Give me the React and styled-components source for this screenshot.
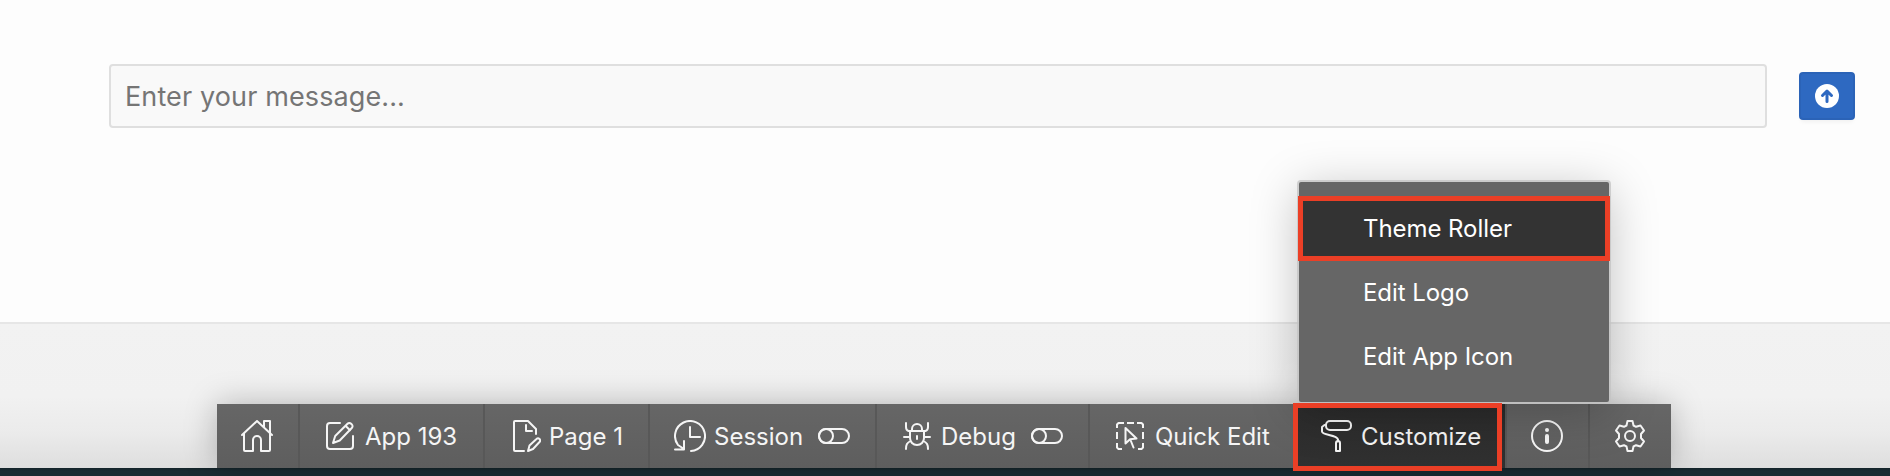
import React from "react";
import styled, { createGlobalStyle, css } from "styled-components";

const GlobalStyle = createGlobalStyle`
  *, *::before, *::after { box-sizing: border-box; }
  html, body { margin: 0; padding: 0; }
  body {
    overflow: hidden;
    font-family: Inter, "Liberation Sans", sans-serif;
    -webkit-font-smoothing: antialiased;
  }
`;

const Page = styled.div`
  display: flex;
  flex-direction: column;
  width: 1890px;
  height: 476px;
  overflow: hidden;
  background: #fdfdfd;
`;

const Composer = styled.main`
  display: flex;
  align-items: flex-start;
  height: 322px;
  padding: 64px 35px 0 109px;
`;

const MessageInput = styled.input`
  flex: 1;
  height: 64px;
  margin: 0 32px 0 0;
  padding: 0 14px;
  border: 2px solid #dfdfdf;
  border-radius: 4px;
  background: #f9f9f9;
  color: #404040;
  font: 400 27px Inter, sans-serif;
  letter-spacing: 0.12px;
  outline: none;
  &::placeholder { color: #757575; opacity: 1; }
`;

const SendButton = styled.button`
  display: flex;
  align-items: center;
  justify-content: center;
  width: 56px;
  height: 48px;
  margin: 8px 0 0;
  padding: 0 0 1px;
  border: 2px solid #2b63b7;
  border-radius: 4px;
  background: #2e69c1;
  box-shadow: 0 4px 4px -2px rgba(0, 0, 0, 0.05);
`;

const Footer = styled.footer`
  display: flex;
  justify-content: flex-start;
  align-items: flex-end;
  height: 146px;
  padding-left: 217px;
  border-top: 2px solid #e6e6e6;
  background: linear-gradient(#f2f2f2 0, #f1f1f1 50%, #ebebeb 75%, #dedede 100%);
`;

const BottomStrip = styled.div`
  position: relative;
  height: 8px;
  background: linear-gradient(#14242a, #1a2c33 3px);
`;

const Toolbar = styled.nav`
  position: relative;
  z-index: 1;
  display: flex;
  height: 64px;
  background: linear-gradient(#666, #5e5e5e);
  box-shadow: 0 0 32px rgba(0, 0, 0, 0.25);
`;

const ToolButton = styled.div`
  position: relative;
  display: flex;
  align-items: center;
  width: ${(p) => p.$width}px;
  height: 64px;
  padding-left: 24px;
  border-right: ${(p) => (p.$last ? "0" : "2px solid #585858")};
  color: #f5f5f5;
  ${(p) => p.$plain && css`
    border-right-color: transparent;
  `}
  ${(p) => p.$active && css`
    z-index: 1;
    background: linear-gradient(#2b2b2b, #313131);
  `}
`;

const Label = styled.span`
  margin-left: ${(p) => p.$gap ?? 8}px;
  padding-top: 2px;
  font-size: 24px;
  font-weight: 380;
  line-height: 32px;
  letter-spacing: ${(p) => p.$track ?? 0}px;
  white-space: nowrap;
`;

const MenuLabel = styled(Label)`
  margin-left: 0;
  padding: 0 0 2px;
  letter-spacing: -0.06px;
`;

const ToggleSlot = styled.span`
  display: flex;
  margin-left: auto;
  padding-right: 25px;
`;

const Menu = styled.div`
  position: absolute;
  left: 3px;
  bottom: 66px;
  width: 310px;
  height: 220px;
  padding: 16px 0;
  border-radius: 2px;
  background: #666;
  box-shadow: 0 0 0 2px rgba(195, 195, 195, 0.75), 0 8px 48px rgba(0, 0, 0, 0.25);
`;

const MenuItem = styled.div`
  position: relative;
  display: flex;
  align-items: center;
  height: 64px;
  padding-left: 64px;
  color: #fff;
  ${(p) => p.$active && css`
    height: 62px;
    margin-bottom: 2px;
    padding-top: 2px;
    background: #333;
  `}
`;

const Highlight = styled.span`
  position: absolute;
  inset: ${(p) => p.$inset};
  border: 5px solid #eb3f26;
  pointer-events: none;
`;

const Svg = styled.svg`
  flex: none;
  display: block;
  width: 32px;
  height: 32px;
  fill: none;
  stroke: currentColor;
  stroke-width: 2;
  stroke-linecap: round;
  stroke-linejoin: round;
`;

const Icon = ({ children }) => <Svg viewBox="0 0 32 32" aria-hidden="true">{children}</Svg>;

const HomeIcon = () => (
  <Icon>
    <path d="M1 15 16 1l15 14M3 13.5V30a1 1 0 0 0 1 1h8V20a4 4 0 0 1 8 0v11h8a1 1 0 0 0 1-1V13.500M23 7V1h6v11.500" />
  </Icon>
);
const EditIcon = () => (
  <Icon>
    <path d="M16 3H6a3 3 0 0 0-3 3v20a3 3 0 0 0 3 3h20a3 3 0 0 0 3-3V16" />
    <path d="m9 23 2.200-7L23.500 3.700a2.500 2.500 0 0 1 3.600 0l.7.700a2.500 2.500 0 0 1 0 3.600L15.700 20.500 9 23ZM21.500 5.700l4.500 4.500" />
  </Icon>
);
const PageIcon = () => (
  <Icon>
    <path d="M15 31H6a1 1 0 0 1-1-1V2a1 1 0 0 1 1-1h13l8 8v5M17 5v6h6" />
    <path d="m19 31 1.500-5.500 7-6.500a2 2 0 0 1 3 3l-6.500 7L19 31Z" />
  </Icon>
);
const SessionIcon = () => (
  <Icon>
    <path d="M17 31A15 15 0 1 0 4 25l6 4M16 7v10h10M10 21v8.500H1" />
  </Icon>
);
const ToggleIcon = () => (
  <Icon>
    <rect x="1" y="9" width="30" height="14" rx="7" />
    <circle cx="8" cy="16" r="7" />
  </Icon>
);
const BugIcon = () => (
  <Icon>
    <path d="M9 11h14v7c0 4-3 7-7 7s-7-3-7-7v-7ZM11 11V9a5 5 0 0 1 10 0v2M9 11H7.500C5.500 10.500 5 9 5 7V3M23 11h1.500c2-.5 2.500-2 2.500-4V3M3 17h6M23 17h6M9.500 21C6 23 5 24.500 5 29M22.500 21c3.500 2 4.500 3.500 4.500 8M16 16v3" />
  </Icon>
);
const QuickIcon = () => (
  <Icon>
    <path d="M3 8V4.500L4.500 3H10M13 3h7M23 3h4.500L29 4.500V8M3 12v7M3 23v4.500L4.500 29H8M29 12v7M29 23v4.500L27.500 29H24" strokeLinecap="butt" />
    <path d="M11.500 8v15.500l4.500-4.300 6.500-.7L11.500 8ZM16.500 20l3 7.500" />
  </Icon>
);
const RollerIcon = () => (
  <Icon>
    <rect x="6" y="1" width="25" height="9" rx="4" />
    <path d="M6 5H4.500L2 7v4.500c0 4 15 3 16 8v2M16 23a2 2 0 0 1 4 0v8h-4v-8Z" />
  </Icon>
);
const InfoIcon = () => (
  <Icon>
    <circle cx="16" cy="16" r="15" />
    <circle cx="16" cy="10" r="2" fill="currentColor" stroke="none" />
    <path d="M16 16v6" strokeWidth="4" />
  </Icon>
);
const GearIcon = () => (
  <Icon>
    <circle cx="16" cy="16" r="5" />
    <path d="M13.500 1h5l1 4.500 2.500 1.300L26.500 5.500l3.500 5-3 3.500v4l3 3.500-3.500 5-4.500-1.300-2.500 1.300-1 4.500h-5l-1-4.500L10 25.200l-4.500 1.300-3.500-5L5 18v-4l-3-3.500 3.500-5L10 6.800l2.500-1.300 1-4.500Z" />
  </Icon>
);

const SendIcon = styled.svg`
  display: block;
  width: 24px;
  height: 24px;
`;

export default function App() {
  return (
    <Page>
      <GlobalStyle />
      <Composer>
        <MessageInput placeholder="Enter your message..." aria-label="Message" />
        <SendButton aria-label="Send">
          <SendIcon viewBox="0 0 24 24">
            <circle cx="12" cy="12" r="12" fill="#fff" />
            <path d="M12 17.500V7.500M7.500 11.500 12 7l4.500 4.500" fill="none" stroke="#2e69c1" strokeWidth="3" strokeLinecap="round" strokeLinejoin="round" />
          </SendIcon>
        </SendButton>
      </Composer>
      <Footer>
        <Toolbar>
          <ToolButton $width={83}><HomeIcon /></ToolButton>
          <ToolButton $width={185}><EditIcon /><Label $gap={9}>App 193</Label></ToolButton>
          <ToolButton $width={165}><PageIcon /><Label>Page 1</Label></ToolButton>
          <ToolButton $width={227}><SessionIcon /><Label>Session</Label><ToggleSlot><ToggleIcon /></ToggleSlot></ToolButton>
          <ToolButton $width={213}><BugIcon /><Label>Debug</Label><ToggleSlot><ToggleIcon /></ToggleSlot></ToolButton>
          <ToolButton $width={206} $plain><QuickIcon /><Label $gap={9}>Quick Edit</Label></ToolButton>
          <ToolButton $width={211} $active>
            <RollerIcon /><Label $gap={9}>Customize</Label>
            <Menu>
              <MenuItem $active><MenuLabel>Theme Roller</MenuLabel><Highlight $inset="-2px -1px -1px -1px" /></MenuItem>
              <MenuItem><MenuLabel>Edit Logo</MenuLabel></MenuItem>
              <MenuItem><MenuLabel>Edit App Icon</MenuLabel></MenuItem>
            </Menu>
            <Highlight $inset="-1px 3px -3px -3px" />
          </ToolButton>
          <ToolButton $width={83}><InfoIcon /></ToolButton>
          <ToolButton $width={81} $last><GearIcon /></ToolButton>
        </Toolbar>
      </Footer>
      <BottomStrip />
    </Page>
  );
}
